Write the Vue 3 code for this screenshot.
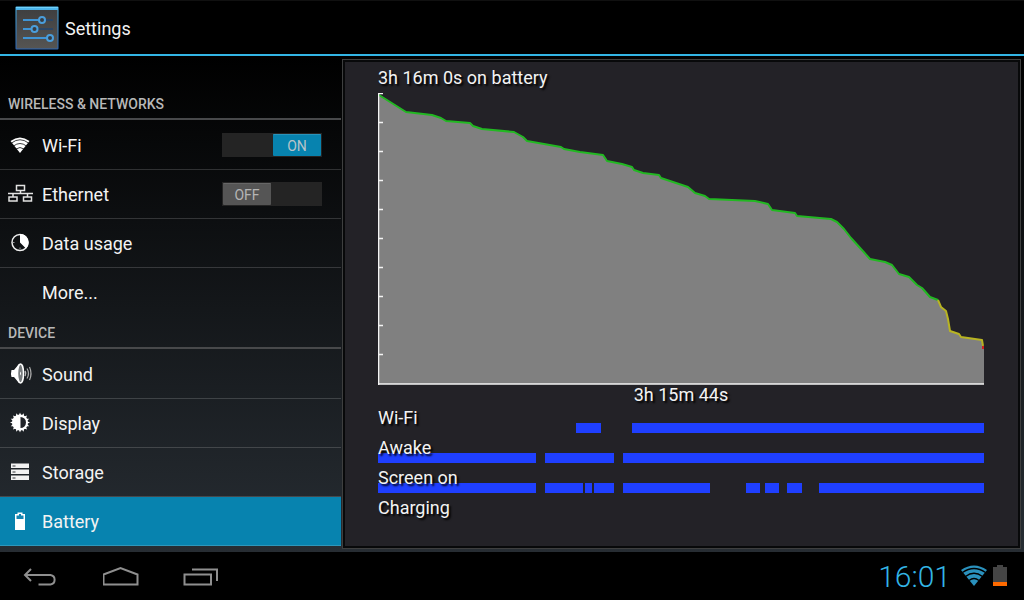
<script setup>
import { ref } from 'vue'

const sections = ref([
  {
    title: 'Wireless & networks',
    items: [
      { id: 'wifi', label: 'Wi-Fi', toggle: true, on: true },
      { id: 'ethernet', label: 'Ethernet', toggle: true, on: false },
      { id: 'data', label: 'Data usage' },
      { id: 'more', label: 'More...' }
    ]
  },
  {
    title: 'Device',
    items: [
      { id: 'sound', label: 'Sound' },
      { id: 'display', label: 'Display' },
      { id: 'storage', label: 'Storage' },
      { id: 'battery', label: 'Battery' }
    ]
  }
])
const selected = ref('battery')

const highLevel =
  '379,95 406,112 432,115 441,118 446,121 470,123 473,126 482,129 514,132 523,137 527,141 561,147 564,149 580,152 603,155 607,161 622,164 632,167 634,170 643,173 659,175 661,178 676,183 688,187 695,193 705,196 709,199 755,201 768,204 772,210 795,213 797,216 831,219 837,222 844,229 851,238 861,249 870,259 885,262 892,265 899,274 909,277 917,285 922,288 930,297 938,300'
const midLevel = '938,300 941,307 946,311 948,319 950,331 959,334 961,337 982,340 983,346'
const lowLevel = '983,346 983,349'
const area = `${highLevel} ${midLevel} 984,348 984,384 379,384`
const ticks = [94, 123, 152, 181, 210, 239, 268, 297, 326, 355]

// Segments are [start, end] on a time line that is SPAN units long
const SPAN = 606
const timelines = [
  { label: 'Wi-Fi', segments: [[198, 223], [254, 606]] },
  { label: 'Awake', segments: [[0, 158], [167, 236], [245, 606]] },
  {
    label: 'Screen on',
    segments: [[0, 158], [167, 205], [207, 214], [216, 236], [245, 332], [368, 382], [387, 401], [409, 424], [441, 606]]
  },
  { label: 'Charging', segments: [] }
]
const segmentStyle = ([from, to]) => ({
  left: (from / SPAN) * 100 + '%',
  width: ((to - from) / SPAN) * 100 + '%'
})
const teeth = Array.from({ length: 16 }, (_, i) => i * 22.5)
</script>

<template>
  <div class="screen">
    <header class="action-bar">
      <svg class="app-icon" viewBox="0 0 44 44" aria-hidden="true">
        <defs>
          <linearGradient id="plate" x1="0" y1="0" x2="0" y2="1">
            <stop offset="0" stop-color="#3f3f40" />
            <stop offset="1" stop-color="#565553" />
          </linearGradient>
          <linearGradient id="rim" x1="0" y1="0" x2="0" y2="1">
            <stop offset="0" stop-color="#4db9ee" />
            <stop offset="1" stop-color="#2a66b8" />
          </linearGradient>
        </defs>
        <rect x="0.5" y="0.5" width="43" height="43" rx="1" fill="url(#rim)" />
        <rect x="1.500" y="4" width="41" height="38.500" fill="url(#plate)" />
        <path d="M1 1.500h42" stroke="#6fd0fa" />
        <path d="M8 14h30M8 23h30M8 32h30" stroke="#23466f" stroke-width="1.500" />
        <path d="M8 14h16M8 23h9M8 32h24" stroke="#4095d6" stroke-width="2" />
        <g fill="#383c42" stroke="#4a9edc" stroke-width="2">
          <circle cx="27" cy="14" r="3" />
          <circle cx="19.500" cy="23" r="3" />
          <circle cx="35" cy="32" r="3" />
        </g>
      </svg>
      <h1>Settings</h1>
    </header>

    <main class="content">
      <nav class="sidebar" aria-label="Settings categories">
        <section v-for="section in sections" :key="section.title">
          <h2>{{ section.title }}</h2>
          <ul>
            <li v-for="item in section.items" :key="item.id" :class="{ active: item.id === selected }">
              <a :href="'#' + item.id" @click.prevent="selected = item.id">
                <svg v-if="item.id === 'wifi'" class="icon" viewBox="0 0 26 24" aria-hidden="true">
                  <path d="M12 20 2.500 8Q12 1 21.500 8Z" fill="#fff" />
                  <path d="M3.500 10Q12 3.500 20.500 10M5.500 13Q12 8 18.500 13M8 16Q12 13 16 16" fill="none" stroke="#0b0c0e" stroke-width="0.800" />
                </svg>
                <svg v-else-if="item.id === 'ethernet'" class="icon" viewBox="0 0 26 24" aria-hidden="true">
                  <path d="M8.500 3.500h8v5h-8zM1 15h8v4H1zM15.500 15h8v4h-8zM12.500 8.500v3M0 11.500h25M5 11.500V15M19.500 11.500V15" fill="none" stroke="#e2e2e2" stroke-width="1.500" />
                </svg>
                <svg v-else-if="item.id === 'data'" class="icon" viewBox="0 0 26 24" aria-hidden="true">
                  <circle cx="12" cy="11.500" r="8" fill="none" stroke="#eee" stroke-width="1.500" />
                  <path d="M12 11.500V3A8.500 8.500 0 0 1 18 17.500Z" fill="#fff" />
                  <path d="M5 11.500h1.500M12 16.500v1.500" stroke="#999" />
                </svg>
                <svg v-else-if="item.id === 'sound'" class="icon" viewBox="0 0 26 24" aria-hidden="true">
                  <path d="M3.500 8H6l5-6h2v19h-2l-5-6H3.500Q2.500 11.500 3.500 8Z" fill="#fff" />
                  <ellipse cx="12.500" cy="11.500" rx="3" ry="9.500" fill="#777b7d" stroke="#fff" stroke-width="1.500" />
                  <path d="M12 9.500q2 2 0 4z" fill="#fff" />
                  <path d="M17 9q1.500 2.500 0 5" fill="none" stroke="#bbb" stroke-width="1.500" />
                  <path d="M19 6.500q3 5 0 10M21.500 5q3 6.500 0 13" fill="none" stroke="#aaa" stroke-width="1.200" />
                </svg>
                <svg v-else-if="item.id === 'display'" class="icon" viewBox="0 0 26 24" aria-hidden="true">
                  <path v-for="angle in teeth" :key="angle" d="M10.500 5 12 1.500l1.500 3.500z" :transform="`rotate(${angle} 12 11.5)`" fill="#fff" />
                  <circle cx="12" cy="11.500" r="8" fill="#fff" />
                  <path d="M12.500 6a5.500 5.500 0 0 1 0 11z" fill="#202328" />
                </svg>
                <svg v-else-if="item.id === 'storage'" class="icon" viewBox="0 0 26 24" aria-hidden="true">
                  <path d="M3 3.500h18V8H3zM3 9.500h18V14H3zM3 15.500h18V20H3z" fill="#f2f2f2" />
                  <path d="M4.500 6h3M4.500 12h3M4.500 18h3" stroke="#33363a" stroke-width="1.200" />
                </svg>
                <svg v-else-if="item.id === 'battery'" class="icon" viewBox="0 0 26 24" aria-hidden="true">
                  <path d="M7 5h2.500V3.500h5V5H17v16H7z" fill="#fff" />
                  <path d="M8.500 6.500H11V5h2v1.500h2.500v3.500h-7z" fill="#1685b2" />
                </svg>
                <span v-else class="icon"></span>
                <span class="label">{{ item.label }}</span>
              </a>
              <button
                v-if="item.toggle"
                class="switch"
                :class="{ on: item.on }"
                type="button"
                role="switch"
                :aria-checked="item.on"
                :aria-label="item.label"
                @click="item.on = !item.on"
              >
                <span class="thumb">{{ item.on ? 'ON' : 'OFF' }}</span>
              </button>
            </li>
          </ul>
        </section>
      </nav>

      <section class="panel" aria-label="Battery history">
        <div class="history">
          <p class="caption">3h 16m 0s on battery</p>
          <svg class="chart" viewBox="378 93 606 292" preserveAspectRatio="none" role="img" aria-label="Battery level over time">
            <polygon :points="area" fill="#808080" />
            <g fill="none" stroke-width="2" stroke-linejoin="round">
              <polyline :points="highLevel" stroke="#22b822" />
              <polyline :points="midLevel" stroke="#b8b422" />
              <polyline :points="lowLevel" stroke="#d02020" />
            </g>
            <path d="M378.500 93v292M378 384h606" stroke="#f4f4f4" stroke-width="1.500" fill="none" />
            <path v-for="y in ticks" :key="y" :d="`M378 ${y - 0.5}h5`" stroke="#f4f4f4" stroke-width="1.500" />
          </svg>
          <p class="duration">3h 15m 44s</p>
          <div v-for="line in timelines" :key="line.label" class="timeline">
            <span v-for="segment in line.segments" :key="segment[0]" class="segment" :style="segmentStyle(segment)"></span>
            <span class="name">{{ line.label }}</span>
          </div>
        </div>
      </section>
    </main>

    <footer class="system-bar">
      <div class="keys">
        <button type="button" aria-label="Back">
          <svg viewBox="0 0 36 24" aria-hidden="true">
            <path d="M8 3 2 9l6 6M2 9h25.500a4.800 4.800 0 0 1 0 9.500H15.500" />
          </svg>
        </button>
        <button type="button" aria-label="Home">
          <svg viewBox="0 0 36 24" aria-hidden="true">
            <path d="M0 8.500 17 2l17 6.500v10H0z" transform="translate(0.500 0)" />
          </svg>
        </button>
        <button type="button" aria-label="Recent apps">
          <svg viewBox="0 0 36 24" aria-hidden="true">
            <path d="M1.500 8.500h26.500v10H1.500zM9 3.500h25v11.500" />
          </svg>
        </button>
      </div>
      <div class="status">
        <time>16:01</time>
        <svg class="signal" viewBox="0 0 26 22" aria-hidden="true">
          <path d="M13 21 0 5Q13-4 26 5Z" fill="#2a91bd" />
          <path d="M1.500 7.500Q13-0.500 24.500 7.500M4.500 11.500Q13 5 21.500 11.500M8 15.500Q13 11.500 18 15.500" fill="none" stroke="#000" stroke-width="1.300" />
        </svg>
        <svg class="charge" viewBox="0 0 14 22" aria-hidden="true">
          <path d="M0 2h4V0h6v2h4v15H0z" fill="#454545" />
          <path d="M0 17h14v4H0z" fill="#ff6a00" />
        </svg>
      </div>
    </footer>
  </div>
</template>

<style>
body {
  margin: 0;
  background: #000;
}
</style>

<style scoped>
* {
  box-sizing: border-box;
}
.screen {
  display: flex;
  flex-direction: column;
  min-height: 100vh;
  font: 18px/20px Roboto, "Noto Sans", sans-serif;
  color: #f3f3f3;
  background: #000;
}
h1,
h2,
p,
ul {
  margin: 0;
  padding: 0;
  font-weight: 400;
}
.action-bar {
  display: flex;
  align-items: center;
  gap: 6px;
  height: 56px;
  padding-left: 15px;
  border-top: 1px solid #101010;
  border-bottom: 2px solid #33b5e5;
}
.app-icon {
  width: 44px;
  height: 44px;
}
h1 {
  padding-top: 2px;
  font-size: 18px;
}
.content {
  flex: 1;
  display: grid;
  grid-template-columns: 342px 1fr;
  background: linear-gradient(#000, #272d33);
}
.sidebar {
  padding: 32px 1px 0 0;
}
h2 {
  height: 32px;
  margin-bottom: 1px;
  padding: 6px 8px 0;
  border-bottom: 2px solid #48494b;
  font-size: 14px;
  font-weight: 500;
  text-transform: uppercase;
  color: #b8b8b8;
}
ul {
  list-style: none;
}
li {
  display: flex;
  align-items: center;
  height: 49px;
  padding-right: 19px;
  border-bottom: 1px solid rgba(255, 255, 255, 0.16);
}
section:first-child li:last-child {
  border-bottom-color: transparent;
}
li.active {
  background: #0783af;
}
a {
  flex: 1;
  display: flex;
  align-items: center;
  gap: 8px;
  height: 100%;
  padding-left: 8px;
  color: inherit;
  text-decoration: none;
}
.icon {
  width: 26px;
  height: 24px;
}
.label {
  padding-top: 2px;
}
button {
  padding: 0;
  border: 0;
  background: none;
  font: inherit;
}
.switch {
  display: flex;
  width: 100px;
  height: 24px;
  padding: 1px;
  background: #242424;
}
.switch.on {
  justify-content: flex-end;
}
.thumb {
  width: 48px;
  height: 22px;
  border-radius: 1px;
  background: #555;
  border-top: 1px solid #666;
  font-size: 14px;
  line-height: 23px;
  text-align: center;
  color: #b5b5b5;
}
.on .thumb {
  background: #0783af;
  border-top-color: #2a93ba;
  color: #b9c4c9;
}
.panel {
  margin: 3px 3px 3px 0;
  padding: 2px;
  border: 1px solid rgba(255, 255, 255, 0.22);
  background: #08090a;
}
.history {
  height: 100%;
  display: flex;
  flex-direction: column;
  padding: 6px 34px 23px 33px;
  background: #232227;
  text-shadow: 2px 2px 2px #000;
}
.caption {
  height: 25px;
}
.chart {
  flex: 1;
  min-height: 0;
  width: 100%;
}
.duration {
  height: 18px;
  text-align: center;
}
.timeline {
  position: relative;
  height: 30px;
  padding-top: 5px;
}
.segment {
  position: absolute;
  bottom: 0;
  height: 10px;
  background: #1f3fff;
}
.name {
  position: relative;
}
.system-bar {
  display: flex;
  align-items: center;
  justify-content: space-between;
  height: 48px;
  padding: 0 17px 0 23px;
  background: #000;
}
.keys {
  display: flex;
  gap: 44px;
  padding-top: 4px;
}
.keys button {
  display: flex;
}
.keys svg {
  width: 36px;
  height: 24px;
  fill: none;
  stroke: #8f8f8f;
  stroke-width: 2;
}
.status {
  display: flex;
  align-items: center;
}
time {
  margin-right: 10px;
  padding-top: 2px;
  font-size: 30px;
  font-weight: 300;
  line-height: 48px;
  color: #33b5e5;
}
.signal {
  width: 26px;
  height: 22px;
}
.charge {
  width: 14px;
  height: 22px;
  margin-left: 6px;
}
</style>
